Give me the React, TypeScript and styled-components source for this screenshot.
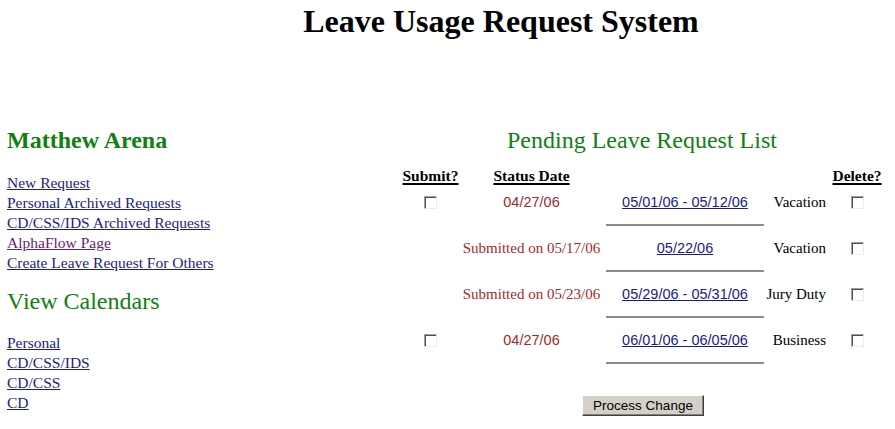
import styled, { createGlobalStyle } from "styled-components";

const GlobalStyle = createGlobalStyle`
  body {
    margin: 0;
    background: #ffffff;
    color: #000000;
    font-family: "Liberation Serif", "Times New Roman", serif;
    font-size: 15px;
  }
`;

const Page = styled.div`
  width: 895px;
  height: 429px;
  box-sizing: border-box;
  padding: 3px 0 0 7px;
  overflow: hidden;
`;

const Title = styled.h1`
  margin: 0;
  padding-left: 100px;
  font-size: 32px;
  line-height: 37px;
  font-weight: bold;
  text-align: center;
`;

const Main = styled.div`
  display: flex;
  margin-top: 86px;
`;

const LeftColumn = styled.div`
  width: 393px;
  display: flex;
  flex-direction: column;
`;

const RightColumn = styled.div`
  width: 484px;
  display: flex;
  flex-direction: column;
`;

const SectionHeading = styled.h2<{ $bold?: boolean; $top?: number }>`
  margin: ${(p) => p.$top ?? 0}px 0 0;
  font-size: 24px;
  line-height: 28px;
  font-weight: ${(p) => (p.$bold ? "bold" : "normal")};
  color: #108010;
`;

const ListHeading = styled(SectionHeading)`
  text-align: center;
`;

const LinkList = styled.div<{ $top: number }>`
  display: flex;
  flex-direction: column;
  align-items: flex-start;
  margin-top: ${(p) => p.$top}px;
`;

const NavLink = styled.a<{ $visited?: boolean }>`
  font-size: 15.5px;
  line-height: 20px;
  color: ${(p) => (p.$visited ? "#702070" : "#1c1c80")};
  text-decoration: underline;
  cursor: pointer;
`;

const COLS = "61px 141px 166px 62px 54px";

const Table = styled.div`
  display: flex;
  flex-direction: column;
  margin-top: 12px;
`;

const HeaderRow = styled.div`
  display: grid;
  grid-template-columns: ${COLS};
  height: 20px;
`;

const HeaderCell = styled.div`
  display: flex;
  align-items: center;
  justify-content: center;
  font-size: 15.5px;
  font-weight: bold;
  text-decoration: underline;
  text-decoration-thickness: 2px;
  text-underline-offset: 2px;
`;

const HeaderGap = styled.div`
  grid-column: span 2;
`;

const Rows = styled.div`
  display: flex;
  flex-direction: column;
  gap: 12px;
  padding-top: 6px;
`;

const Row = styled.div`
  display: grid;
  grid-template-columns: ${COLS};
  align-items: start;
`;

const Cell = styled.div<{ $align?: "center" | "end" }>`
  height: 20px;
  display: flex;
  align-items: center;
  justify-content: ${(p) => (p.$align === "end" ? "flex-end" : "center")};
  padding-right: ${(p) => (p.$align === "end" ? "4px" : "0")};
  white-space: nowrap;
`;

const StatusText = styled.span<{ $sans?: boolean }>`
  color: #a52a2a;
  font-family: ${(p) =>
    p.$sans ? `"Liberation Sans", Arial, sans-serif` : `"Liberation Serif", "Times New Roman", serif`};
  font-size: ${(p) => (p.$sans ? "14.5px" : "15px")};
`;

const DateCell = styled.div`
  display: flex;
  flex-direction: column;
  align-items: center;
  gap: 12px;
`;

const DateLink = styled.a`
  height: 20px;
  display: flex;
  align-items: center;
  font-family: "Liberation Sans", Arial, sans-serif;
  font-size: 14.5px;
  color: #1c1c80;
  text-decoration: underline;
  white-space: nowrap;
  cursor: pointer;
`;

const Rule = styled.div`
  width: 158px;
  height: 2px;
  background: #8c8c8c;
`;

const Check = styled.input`
  appearance: none;
  margin: 0;
  width: 13px;
  height: 13px;
  box-sizing: border-box;
  background: #ffffff;
  border: 1px solid;
  border-color: #a0a0a0 #ececec #ececec #a0a0a0;
  box-shadow: inset 1px 1px 0 #505050;
`;

const ButtonBar = styled.div`
  display: flex;
  justify-content: center;
  margin-top: 31px;
  padding-left: 2px;
`;

const Button = styled.button`
  width: 122px;
  height: 21px;
  padding: 0;
  background: #d4d0c8;
  border: 1px solid;
  border-color: #ffffff #404040 #404040 #ffffff;
  box-shadow: inset -1px -1px 0 #808080;
  font-family: "Liberation Sans", Arial, sans-serif;
  font-size: 13.5px;
  color: #000000;
`;

type Request = {
  submit: boolean;
  status: string;
  submitted: boolean;
  dates: string;
  type: string;
};

const requests: Request[] = [
  { submit: true, status: "04/27/06", submitted: false, dates: "05/01/06 - 05/12/06", type: "Vacation" },
  { submit: false, status: "Submitted on 05/17/06", submitted: true, dates: "05/22/06", type: "Vacation" },
  { submit: false, status: "Submitted on 05/23/06", submitted: true, dates: "05/29/06 - 05/31/06", type: "Jury Duty" },
  { submit: true, status: "04/27/06", submitted: false, dates: "06/01/06 - 06/05/06", type: "Business" },
];

const mainLinks = [
  "New Request",
  "Personal Archived Requests",
  "CD/CSS/IDS Archived Requests",
  "AlphaFlow Page",
  "Create Leave Request For Others",
];

const calendarLinks = ["Personal", "CD/CSS/IDS", "CD/CSS", "CD"];

export default function App() {
  return (
    <>
      <GlobalStyle />
      <Page>
        <Title>Leave Usage Request System</Title>
        <Main>
          <LeftColumn>
            <SectionHeading $bold>Matthew Arena</SectionHeading>
            <LinkList $top={19}>
              {mainLinks.map((l) => (
                <NavLink key={l} $visited={l === "AlphaFlow Page"}>
                  {l}
                </NavLink>
              ))}
            </LinkList>
            <SectionHeading $top={14}>View Calendars</SectionHeading>
            <LinkList $top={18}>
              {calendarLinks.map((l) => (
                <NavLink key={l}>{l}</NavLink>
              ))}
            </LinkList>
          </LeftColumn>
          <RightColumn>
            <ListHeading>Pending Leave Request List</ListHeading>
            <Table>
              <HeaderRow>
                <HeaderCell>Submit?</HeaderCell>
                <HeaderCell>Status Date</HeaderCell>
                <HeaderGap />
                <HeaderCell>Delete?</HeaderCell>
              </HeaderRow>
              <Rows>
                {requests.map((r, i) => (
                  <Row key={i}>
                    <Cell>{r.submit && <Check type="checkbox" />}</Cell>
                    <Cell>
                      <StatusText $sans={!r.submitted}>{r.status}</StatusText>
                    </Cell>
                    <DateCell>
                      <DateLink>{r.dates}</DateLink>
                      <Rule />
                    </DateCell>
                    <Cell $align="end">{r.type}</Cell>
                    <Cell>
                      <Check type="checkbox" />
                    </Cell>
                  </Row>
                ))}
              </Rows>
              <ButtonBar>
                <Button>Process Change</Button>
              </ButtonBar>
            </Table>
          </RightColumn>
        </Main>
      </Page>
    </>
  );
}
